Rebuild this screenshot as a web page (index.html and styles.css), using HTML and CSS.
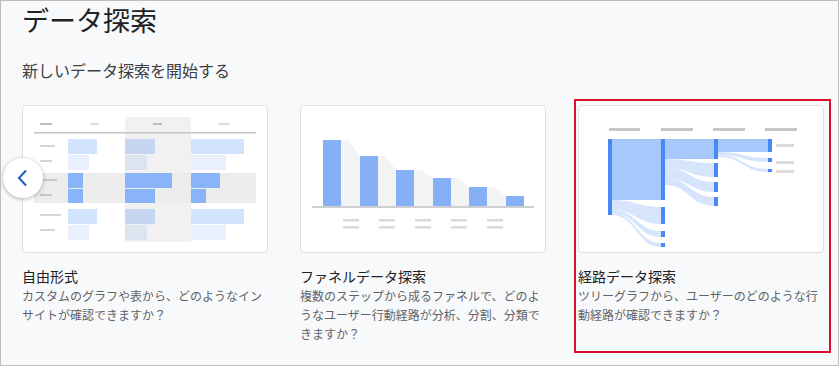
FILE: index.html
```html
<!DOCTYPE html>
<html lang="ja">
<head>
    <meta charset="UTF-8">
    <meta name="viewport" content="width=device-width, initial-scale=1.0">
    <title>データ探索</title>
    <link rel="stylesheet" href="styles.css">
</head>
<body>
    <div class="frame">
        <h1 class="page-title">データ探索</h1>
        <h2 class="section-title">新しいデータ探索を開始する</h2>

        <div class="cards">
            <button class="nav-prev" aria-label="前へ">
                <svg viewBox="0 0 12 18"><path d="M9 1.5L2 9l7 7.5"/></svg>
            </button>

            <!-- 自由形式 -->
            <div class="card">
                <div class="thumb">
                    <svg viewBox="1 1 244 146">
                        <rect x="103" y="12" width="66" height="125" fill="#f1f1f1"/>
                        <rect x="12" y="68" width="222" height="30" fill="#ececec"/>
                        <rect x="18" y="18" width="12" height="2" fill="#bdbdbd"/>
                        <rect x="68" y="18" width="9" height="2" fill="#dedede"/>
                        <rect x="131" y="18" width="9" height="2" fill="#bdbdbd"/>
                        <rect x="196" y="18" width="12" height="2" fill="#dedede"/>
                        <rect x="12" y="27" width="222" height="1.5" fill="#c4c4c4"/>

                        <rect x="18" y="40" width="15" height="2" fill="#d6d6d6"/>
                        <rect x="18" y="55" width="12" height="2" fill="#d6d6d6"/>
                        <rect x="18" y="74" width="17" height="2" fill="#c8c8c8"/>
                        <rect x="18" y="89" width="12" height="2" fill="#c8c8c8"/>
                        <rect x="18" y="109" width="21" height="2" fill="#d6d6d6"/>
                        <rect x="18" y="124" width="15" height="2" fill="#d6d6d6"/>

                        <rect x="46" y="34" width="29" height="15" fill="#d2e3fc"/>
                        <rect x="103" y="34" width="30" height="15" fill="#c6d6f1"/>
                        <rect x="169" y="34" width="53" height="15" fill="#d2e3fc"/>
                        <rect x="46" y="50" width="21" height="15" fill="#e8f0fe"/>
                        <rect x="103" y="50" width="22" height="15" fill="#dce4ef"/>
                        <rect x="169" y="50" width="35" height="15" fill="#e8f0fe"/>
                        <rect x="46" y="68" width="15" height="15" fill="#8ab4f8"/>
                        <rect x="103" y="68" width="47" height="15" fill="#8ab4f8"/>
                        <rect x="169" y="68" width="29" height="15" fill="#8ab4f8"/>
                        <rect x="46" y="84" width="15" height="14" fill="#8ab4f8"/>
                        <rect x="103" y="84" width="30" height="14" fill="#8ab4f8"/>
                        <rect x="169" y="84" width="15" height="14" fill="#8ab4f8"/>
                        <rect x="46" y="104" width="29" height="15" fill="#d2e3fc"/>
                        <rect x="103" y="104" width="30" height="15" fill="#c6d6f1"/>
                        <rect x="169" y="104" width="53" height="15" fill="#d2e3fc"/>
                        <rect x="46" y="120" width="21" height="15" fill="#e8f0fe"/>
                        <rect x="103" y="120" width="22" height="15" fill="#dce4ef"/>
                        <rect x="169" y="120" width="35" height="15" fill="#e8f0fe"/>
                    </svg>
                </div>
                <div class="card-title">自由形式</div>
                <p class="card-desc">カスタムのグラフや表から、どのようなインサイトが確認できますか？</p>
            </div>

            <!-- ファネル -->
            <div class="card">
                <div class="thumb">
                    <svg viewBox="1 1 244 146">
                        <g fill="#f3f3f3">
                            <polygon points="41,35 48,35 60,51 60,101 41,101"/>
                            <polygon points="78,51 85,51 96,65 96,101 78,101"/>
                            <polygon points="114,65 121,65 133,73 133,101 114,101"/>
                            <polygon points="151,73 158,73 169,82 169,101 151,101"/>
                            <polygon points="187,82 194,82 206,91 206,101 187,101"/>
                        </g>
                        <g fill="#86b0f6">
                            <rect x="23" y="35" width="18" height="66"/>
                            <rect x="60" y="51" width="18" height="50"/>
                            <rect x="96" y="65" width="18" height="36"/>
                            <rect x="133" y="73" width="18" height="28"/>
                            <rect x="169" y="82" width="18" height="19"/>
                            <rect x="206" y="91" width="18" height="10"/>
                        </g>
                        <rect x="12" y="101" width="222" height="2" fill="#cfcfcf"/>
                        <g fill="#d9d9d9">
                            <rect x="43" y="114" width="16" height="2.5"/>
                            <rect x="43" y="121" width="16" height="2.5"/>
                            <rect x="79" y="114" width="16" height="2.5"/>
                            <rect x="79" y="121" width="16" height="2.5"/>
                            <rect x="115" y="114" width="16" height="2.5"/>
                            <rect x="115" y="121" width="16" height="2.5"/>
                            <rect x="151" y="114" width="16" height="2.5"/>
                            <rect x="151" y="121" width="16" height="2.5"/>
                            <rect x="187" y="114" width="16" height="2.5"/>
                            <rect x="187" y="121" width="16" height="2.5"/>
                        </g>
                    </svg>
                </div>
                <div class="card-title">ファネルデータ探索</div>
                <p class="card-desc">複数のステップから成るファネルで、どのようなユーザー行動経路が分析、分割、分類できますか？</p>
            </div>

            <!-- 経路 -->
            <div class="card is-selected">
                <div class="thumb">
                    <svg viewBox="1 1 244 146">
                        <g fill="#c6c6c6">
                            <rect x="31" y="23" width="31" height="3"/>
                            <rect x="83" y="23" width="32" height="3"/>
                            <rect x="135" y="23" width="32" height="3"/>
                            <rect x="187" y="23" width="32" height="3"/>
                        </g>
                        <g fill="#a8c7fa">
                            <rect x="34" y="34" width="49" height="61"/>
                            <rect x="87" y="34" width="49" height="20"/>
                            <rect x="140" y="34" width="50" height="13"/>
                        </g>
                        <g fill="#aecbfa" fill-opacity="0.5">
                            <path d="M34 95C58 95 59 102 83 102L83 119C59 119 58 105 34 105Z"/>
                            <path d="M34 105C58 105 59 126 83 126L83 132C59 132 58 108 34 108Z"/>
                            <path d="M34 108C58 108 59 138 83 138L83 142C59 142 58 110 34 110Z"/>
                            <path d="M87 54C111 54 112 58 136 58L136 72C112 72 111 63 87 63Z"/>
                            <path d="M87 63C111 63 112 77 136 77L136 87C112 87 111 73 87 73Z"/>
                            <path d="M87 73C111 73 112 92 136 92L136 101C112 101 111 80 87 80Z"/>
                            <path d="M140 47C165 47 165 53 190 53L190 57C165 57 165 50 140 50Z"/>
                            <path d="M140 50C165 50 165 64 190 64L190 67C165 67 165 52 140 52Z"/>
                        </g>
                        <g fill="#4a89f3">
                            <rect x="30" y="34" width="4" height="76"/>
                            <rect x="83" y="34" width="4" height="61"/>
                            <rect x="83" y="102" width="4" height="17"/>
                            <rect x="83" y="126" width="4" height="6"/>
                            <rect x="83" y="138" width="4" height="4"/>
                            <rect x="136" y="34" width="4" height="20"/>
                            <rect x="136" y="58" width="4" height="14"/>
                            <rect x="136" y="77" width="4" height="10"/>
                            <rect x="136" y="92" width="4" height="9"/>
                            <rect x="190" y="34" width="4" height="13"/>
                            <rect x="190" y="53" width="4" height="4"/>
                            <rect x="190" y="64" width="4" height="3"/>
                        </g>
                        <g fill="#dcdcdc">
                            <rect x="198" y="39" width="18" height="3"/>
                            <rect x="198" y="56" width="18" height="3"/>
                            <rect x="198" y="65" width="18" height="3"/>
                        </g>
                    </svg>
                </div>
                <div class="card-title">経路データ探索</div>
                <p class="card-desc">ツリーグラフから、ユーザーのどのような行動経路が確認できますか？</p>
            </div>
        </div>
    </div>
</body>
</html>
```

FILE: styles.css
```css
* {
    margin: 0;
    padding: 0;
    box-sizing: border-box;
}

body {
    background: #f8f9fa;
    font-family: Roboto, 'Noto Sans CJK JP', sans-serif;
    color: #202124;
}

.frame {
    height: 366px;
    border: 1px solid #bdbdbd;
    padding: 3px 0 0 21px;
    overflow: hidden;
}

.page-title {
    font-size: 27px;
    font-weight: 400;
    line-height: 36px;
}

.section-title {
    font-size: 16px;
    font-weight: 400;
    line-height: 24px;
    margin-top: 20px;
    color: #3c4043;
}

.cards {
    position: relative;
    display: grid;
    grid-template-columns: repeat(3, 246px);
    column-gap: 32px;
    margin-top: 21px;
}

.card {
    position: relative;
}

.thumb {
    height: 148px;
    background: #fff;
    border: 1px solid #e0e0e0;
    border-radius: 4px;
}

.thumb svg {
    display: block;
    width: 244px;
    height: 146px;
}

.card-title {
    font-size: 14px;
    line-height: 20px;
    margin-top: 14px;
}

.card-desc {
    font-size: 12px;
    line-height: 19px;
    margin-top: 1px;
    color: #5f6368;
}

/* annotation frame round the selected card */
.card.is-selected::after {
    content: '';
    position: absolute;
    top: -6px;
    left: -4px;
    right: -7px;
    bottom: -8px;
    border: 2px solid #dc0f2d;
    pointer-events: none;
}

.nav-prev {
    position: absolute;
    left: -19px;
    top: 53px;
    width: 40px;
    height: 40px;
    border: none;
    border-radius: 50%;
    background: #fff;
    box-shadow: 0 1px 4px rgba(0, 0, 0, 0.3);
    display: flex;
    align-items: center;
    justify-content: center;
    z-index: 2;
}

.nav-prev svg {
    width: 12px;
    height: 18px;
    fill: none;
    stroke: #1a5cc8;
    stroke-width: 2;
}
```
